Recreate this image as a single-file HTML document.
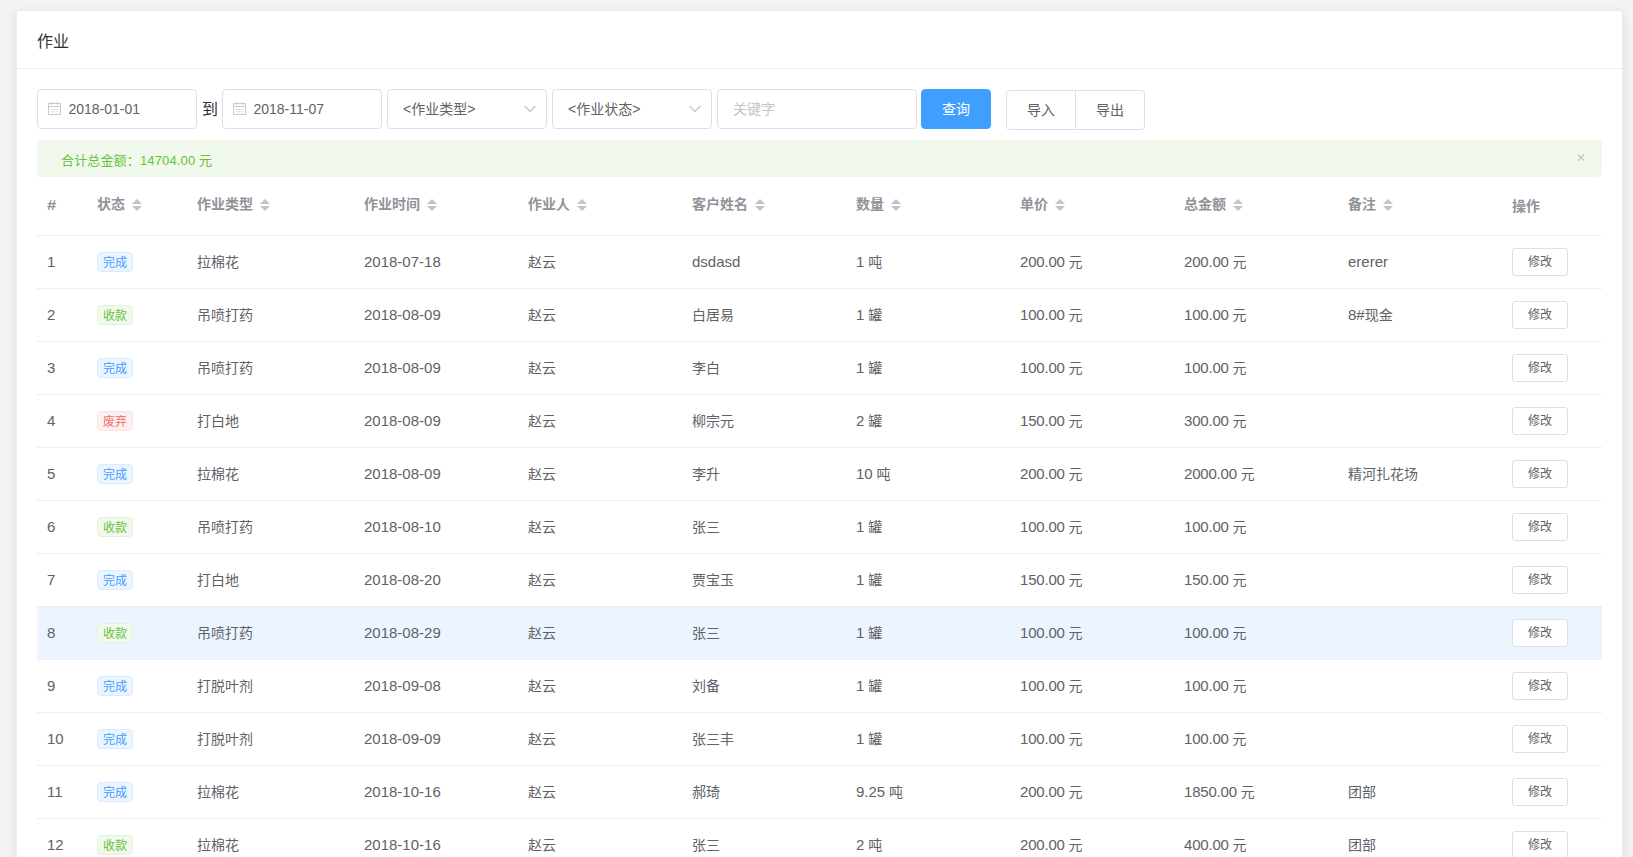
<!DOCTYPE html>
<html lang="zh-CN"><head><meta charset="utf-8"><title>作业</title>
<style>
*{box-sizing:border-box}
html,body{margin:0;padding:0}
body{width:1633px;height:857px;overflow:hidden;background:#f3f3f3;font-family:"Liberation Sans","Noto Sans CJK SC",sans-serif;color:#2c3e50;font-size:16px;position:relative}
.card{position:absolute;left:16px;top:10px;width:1607px;height:900px;background:#fff;border:1px solid #ebeef5;border-radius:4px;box-shadow:0 2px 10px 0 rgba(0,0,0,.1)}
.hd{height:58px;overflow:hidden;border-bottom:1px solid #ebeef5;padding:0 20px;line-height:62px;font-size:16px;color:#303133}
.abs{position:absolute}
.inp{position:absolute;top:89px;height:40px;border:1px solid #dcdfe6;border-radius:4px;background:#fff;font-size:14px;color:#606266;line-height:38px}
.inp .t{position:absolute;left:30.400px;top:0}
.inp .s{position:absolute;left:15px;top:0}
.inp .ph{position:absolute;left:15px;top:0;color:#c0c4cc}
.btn{position:absolute;height:40px;border-radius:4px;font-size:14px;text-align:center;line-height:38px;border:1px solid #dcdfe6;color:#606266;background:#fff}
.btn.pri{background:#409eff;border-color:#409eff;color:#fff}
.alert{position:absolute;left:37px;top:140px;width:1565px;height:37px;overflow:hidden;letter-spacing:.15px;background:#f0f9eb;border-radius:4px;color:#67c23a;font-size:13px;line-height:42px;padding-left:24px}
table{position:absolute;left:37px;top:177px;width:1565px;border-collapse:separate;border-spacing:0;table-layout:fixed;font-size:14px;color:#606266}
th{height:59px;padding:0;border-bottom:1px solid #ebeef5;text-align:left;color:#909399;font-weight:bold;vertical-align:middle}
td{height:53px;padding:0;border-bottom:1px solid #ebeef5;vertical-align:middle}
.c{padding:0 10px;line-height:23px;white-space:nowrap}
th .c{position:relative;top:-1px}
tr.cur td{background:#ecf5ff}
.l{font-size:15px}
.hs{display:inline-block;transform:scaleX(1.18);transform-origin:0 50%}
.m .l{letter-spacing:-.2px}
.tag{display:inline-block;position:relative;top:-1px;height:20px;line-height:20px;padding:0 5px;font-size:12px;border:1px solid #d9ecff;background:#ecf5ff;color:#409eff;border-radius:4px;vertical-align:middle}
.tag.g{background:#f0f9eb;border-color:#e1f3d8;color:#67c23a}
.tag.r{background:#fef0f0;border-color:#fde2e2;color:#f56c6c}
.mb{display:inline-block;width:56px;height:28px;line-height:26px;border:1px solid #dcdfe6;border-radius:3px;font-size:12px;color:#606266;text-align:center;background:#fff;vertical-align:middle}
.cw{display:inline-block;position:relative;top:1px;width:24px;height:34px;vertical-align:middle}
.cw i{position:absolute;left:7px;width:0;height:0;border:5px solid transparent}
.cw .up{border-bottom-color:#c0c4cc;top:5px}
.cw .dn{border-top-color:#c0c4cc;bottom:7px}
</style></head><body>
<div class="card"><div class="hd">作业</div></div>

<div class="inp" style="left:37px;width:160px"><svg class="abs" style="left:9px;top:11px" width="16" height="16" viewBox="0 0 16 16"><rect x="1.500" y="2.500" width="12" height="11" fill="none" stroke="#c6cad1"/><path d="M1.500 5.500h12M4.500 1v3M10.500 1v3" stroke="#c6cad1" fill="none"/><path d="M4.300 8.500h1.400M6.800 8.500h1.400M9.500 8.500h1.400M4.300 10.800h1.400M6.800 10.800h1.400M9.500 10.800h1.400" stroke="#c8ccd4" fill="none"/></svg><span class="t">2018-01-01</span></div>
<div class="abs" style="left:202px;top:91px;line-height:38px;font-size:16px;color:#303133">到</div>
<div class="inp" style="left:222px;width:160px"><svg class="abs" style="left:9px;top:11px" width="16" height="16" viewBox="0 0 16 16"><rect x="1.500" y="2.500" width="12" height="11" fill="none" stroke="#c6cad1"/><path d="M1.500 5.500h12M4.500 1v3M10.500 1v3" stroke="#c6cad1" fill="none"/><path d="M4.300 8.500h1.400M6.800 8.500h1.400M9.500 8.500h1.400M4.300 10.800h1.400M6.800 10.800h1.400M9.500 10.800h1.400" stroke="#c8ccd4" fill="none"/></svg><span class="t">2018-11-07</span></div>
<div class="inp" style="left:387px;width:160px"><span class="s">&lt;作业类型&gt;</span><svg class="abs" style="left:135px;top:14px" width="14" height="10" viewBox="0 0 14 10"><path d="M1.5 2l5.5 5.5L12.500 2" fill="none" stroke="#c0c4cc" stroke-width="1.2"/></svg></div>
<div class="inp" style="left:552px;width:160px"><span class="s">&lt;作业状态&gt;</span><svg class="abs" style="left:135px;top:14px" width="14" height="10" viewBox="0 0 14 10"><path d="M1.5 2l5.5 5.5L12.500 2" fill="none" stroke="#c0c4cc" stroke-width="1.2"/></svg></div>
<div class="inp" style="left:717px;width:200px"><span class="ph">关键字</span></div>
<div class="btn pri" style="left:921px;top:89px;width:70px">查询</div>
<div class="btn" style="left:1006px;top:90px;width:70px;border-radius:4px 0 0 4px">导入</div>
<div class="btn" style="left:1075px;top:90px;width:70px;border-radius:0 4px 4px 0">导出</div>

<div class="alert">合计总金额：14704.00 元<svg class="abs" style="left:1539px;top:12px" width="10" height="11" viewBox="0 0 10 11"><title>关闭</title><path d="M1.800 2.300l6.400 6.400M8.200 2.300l-6.400 6.400" stroke="#b9bdc6" stroke-width="1.200" fill="none"/></svg></div>

<table>
<colgroup><col style="width:50px"><col style="width:100px"><col style="width:167px"><col style="width:164px"><col style="width:164px"><col style="width:164px"><col style="width:164px"><col style="width:164px"><col style="width:164px"><col style="width:164px"><col style="width:100px"></colgroup>
<thead><tr><th><div class="c"><span class="hs">#</span></div></th><th><div class="c">状态<span class="cw"><i class="up"></i><i class="dn"></i></span></div></th><th><div class="c">作业类型<span class="cw"><i class="up"></i><i class="dn"></i></span></div></th><th><div class="c">作业时间<span class="cw"><i class="up"></i><i class="dn"></i></span></div></th><th><div class="c">作业人<span class="cw"><i class="up"></i><i class="dn"></i></span></div></th><th><div class="c">客户姓名<span class="cw"><i class="up"></i><i class="dn"></i></span></div></th><th><div class="c">数量<span class="cw"><i class="up"></i><i class="dn"></i></span></div></th><th><div class="c">单价<span class="cw"><i class="up"></i><i class="dn"></i></span></div></th><th><div class="c">总金额<span class="cw"><i class="up"></i><i class="dn"></i></span></div></th><th><div class="c">备注<span class="cw"><i class="up"></i><i class="dn"></i></span></div></th><th><div class="c" style="top:0">操作</div></th></tr></thead>
<tbody>
<tr><td><div class="c"><span class="l">1</span></div></td><td><div class="c"><span class="tag b">完成</span></div></td><td><div class="c">拉棉花</div></td><td><div class="c"><span class="l">2018-07-18</span></div></td><td><div class="c">赵云</div></td><td><div class="c"><span class="l">dsdasd</span></div></td><td><div class="c"><span class="l">1</span> 吨</div></td><td><div class="c m"><span class="l">200.00</span> 元</div></td><td><div class="c m"><span class="l">200.00</span> 元</div></td><td><div class="c"><span class="l">ererer</span></div></td><td><div class="c"><span class="mb">修改</span></div></td></tr>
<tr><td><div class="c"><span class="l">2</span></div></td><td><div class="c"><span class="tag g">收款</span></div></td><td><div class="c">吊喷打药</div></td><td><div class="c"><span class="l">2018-08-09</span></div></td><td><div class="c">赵云</div></td><td><div class="c">白居易</div></td><td><div class="c"><span class="l">1</span> 罐</div></td><td><div class="c m"><span class="l">100.00</span> 元</div></td><td><div class="c m"><span class="l">100.00</span> 元</div></td><td><div class="c"><span class="l">8#</span>现金</div></td><td><div class="c"><span class="mb">修改</span></div></td></tr>
<tr><td><div class="c"><span class="l">3</span></div></td><td><div class="c"><span class="tag b">完成</span></div></td><td><div class="c">吊喷打药</div></td><td><div class="c"><span class="l">2018-08-09</span></div></td><td><div class="c">赵云</div></td><td><div class="c">李白</div></td><td><div class="c"><span class="l">1</span> 罐</div></td><td><div class="c m"><span class="l">100.00</span> 元</div></td><td><div class="c m"><span class="l">100.00</span> 元</div></td><td><div class="c"></div></td><td><div class="c"><span class="mb">修改</span></div></td></tr>
<tr><td><div class="c"><span class="l">4</span></div></td><td><div class="c"><span class="tag r">废弃</span></div></td><td><div class="c">打白地</div></td><td><div class="c"><span class="l">2018-08-09</span></div></td><td><div class="c">赵云</div></td><td><div class="c">柳宗元</div></td><td><div class="c"><span class="l">2</span> 罐</div></td><td><div class="c m"><span class="l">150.00</span> 元</div></td><td><div class="c m"><span class="l">300.00</span> 元</div></td><td><div class="c"></div></td><td><div class="c"><span class="mb">修改</span></div></td></tr>
<tr><td><div class="c"><span class="l">5</span></div></td><td><div class="c"><span class="tag b">完成</span></div></td><td><div class="c">拉棉花</div></td><td><div class="c"><span class="l">2018-08-09</span></div></td><td><div class="c">赵云</div></td><td><div class="c">李升</div></td><td><div class="c"><span class="l">10</span> 吨</div></td><td><div class="c m"><span class="l">200.00</span> 元</div></td><td><div class="c m"><span class="l">2000.00</span> 元</div></td><td><div class="c">精河扎花场</div></td><td><div class="c"><span class="mb">修改</span></div></td></tr>
<tr><td><div class="c"><span class="l">6</span></div></td><td><div class="c"><span class="tag g">收款</span></div></td><td><div class="c">吊喷打药</div></td><td><div class="c"><span class="l">2018-08-10</span></div></td><td><div class="c">赵云</div></td><td><div class="c">张三</div></td><td><div class="c"><span class="l">1</span> 罐</div></td><td><div class="c m"><span class="l">100.00</span> 元</div></td><td><div class="c m"><span class="l">100.00</span> 元</div></td><td><div class="c"></div></td><td><div class="c"><span class="mb">修改</span></div></td></tr>
<tr><td><div class="c"><span class="l">7</span></div></td><td><div class="c"><span class="tag b">完成</span></div></td><td><div class="c">打白地</div></td><td><div class="c"><span class="l">2018-08-20</span></div></td><td><div class="c">赵云</div></td><td><div class="c">贾宝玉</div></td><td><div class="c"><span class="l">1</span> 罐</div></td><td><div class="c m"><span class="l">150.00</span> 元</div></td><td><div class="c m"><span class="l">150.00</span> 元</div></td><td><div class="c"></div></td><td><div class="c"><span class="mb">修改</span></div></td></tr>
<tr class="cur"><td><div class="c"><span class="l">8</span></div></td><td><div class="c"><span class="tag g">收款</span></div></td><td><div class="c">吊喷打药</div></td><td><div class="c"><span class="l">2018-08-29</span></div></td><td><div class="c">赵云</div></td><td><div class="c">张三</div></td><td><div class="c"><span class="l">1</span> 罐</div></td><td><div class="c m"><span class="l">100.00</span> 元</div></td><td><div class="c m"><span class="l">100.00</span> 元</div></td><td><div class="c"></div></td><td><div class="c"><span class="mb">修改</span></div></td></tr>
<tr><td><div class="c"><span class="l">9</span></div></td><td><div class="c"><span class="tag b">完成</span></div></td><td><div class="c">打脱叶剂</div></td><td><div class="c"><span class="l">2018-09-08</span></div></td><td><div class="c">赵云</div></td><td><div class="c">刘备</div></td><td><div class="c"><span class="l">1</span> 罐</div></td><td><div class="c m"><span class="l">100.00</span> 元</div></td><td><div class="c m"><span class="l">100.00</span> 元</div></td><td><div class="c"></div></td><td><div class="c"><span class="mb">修改</span></div></td></tr>
<tr><td><div class="c"><span class="l">10</span></div></td><td><div class="c"><span class="tag b">完成</span></div></td><td><div class="c">打脱叶剂</div></td><td><div class="c"><span class="l">2018-09-09</span></div></td><td><div class="c">赵云</div></td><td><div class="c">张三丰</div></td><td><div class="c"><span class="l">1</span> 罐</div></td><td><div class="c m"><span class="l">100.00</span> 元</div></td><td><div class="c m"><span class="l">100.00</span> 元</div></td><td><div class="c"></div></td><td><div class="c"><span class="mb">修改</span></div></td></tr>
<tr><td><div class="c"><span class="l">11</span></div></td><td><div class="c"><span class="tag b">完成</span></div></td><td><div class="c">拉棉花</div></td><td><div class="c"><span class="l">2018-10-16</span></div></td><td><div class="c">赵云</div></td><td><div class="c">郝琦</div></td><td><div class="c"><span class="l">9.25</span> 吨</div></td><td><div class="c m"><span class="l">200.00</span> 元</div></td><td><div class="c m"><span class="l">1850.00</span> 元</div></td><td><div class="c">团部</div></td><td><div class="c"><span class="mb">修改</span></div></td></tr>
<tr><td><div class="c"><span class="l">12</span></div></td><td><div class="c"><span class="tag g">收款</span></div></td><td><div class="c">拉棉花</div></td><td><div class="c"><span class="l">2018-10-16</span></div></td><td><div class="c">赵云</div></td><td><div class="c">张三</div></td><td><div class="c"><span class="l">2</span> 吨</div></td><td><div class="c m"><span class="l">200.00</span> 元</div></td><td><div class="c m"><span class="l">400.00</span> 元</div></td><td><div class="c">团部</div></td><td><div class="c"><span class="mb">修改</span></div></td></tr>
</tbody></table>
</body></html>
